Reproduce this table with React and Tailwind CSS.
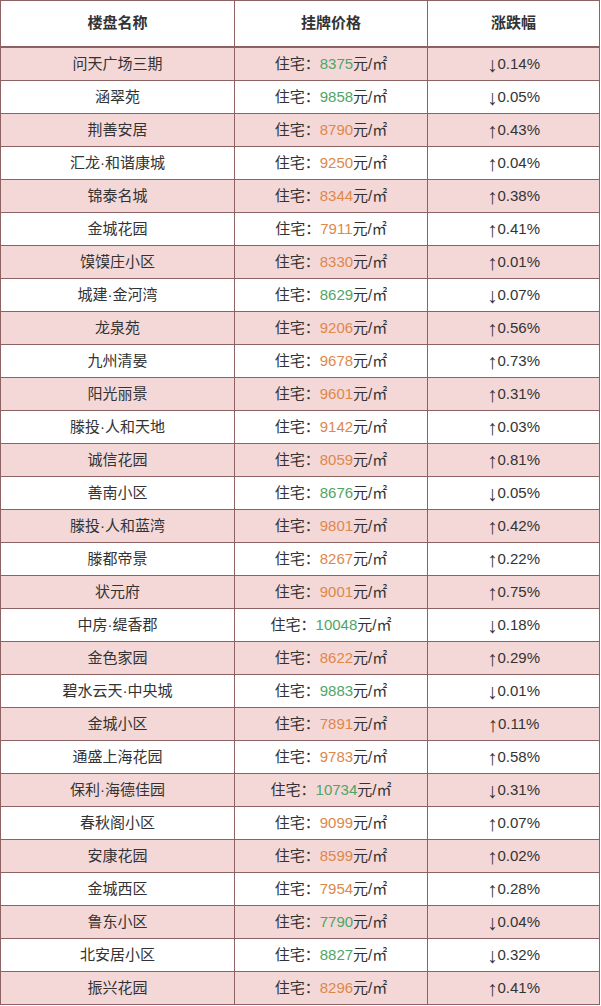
import React from "react";

const rows = [
  ["问天广场三期", "8375", "down", "0.14%"],
  ["涵翠苑", "9858", "down", "0.05%"],
  ["荆善安居", "8790", "up", "0.43%"],
  ["汇龙·和谐康城", "9250", "up", "0.04%"],
  ["锦泰名城", "8344", "up", "0.38%"],
  ["金城花园", "7911", "up", "0.41%"],
  ["馍馍庄小区", "8330", "up", "0.01%"],
  ["城建·金河湾", "8629", "down", "0.07%"],
  ["龙泉苑", "9206", "up", "0.56%"],
  ["九州清晏", "9678", "up", "0.73%"],
  ["阳光丽景", "9601", "up", "0.31%"],
  ["滕投·人和天地", "9142", "up", "0.03%"],
  ["诚信花园", "8059", "up", "0.81%"],
  ["善南小区", "8676", "down", "0.05%"],
  ["滕投·人和蓝湾", "9801", "up", "0.42%"],
  ["滕都帝景", "8267", "up", "0.22%"],
  ["状元府", "9001", "up", "0.75%"],
  ["中房·缇香郡", "10048", "down", "0.18%"],
  ["金色家园", "8622", "up", "0.29%"],
  ["碧水云天·中央城", "9883", "down", "0.01%"],
  ["金城小区", "7891", "up", "0.11%"],
  ["通盛上海花园", "9783", "up", "0.58%"],
  ["保利·海德佳园", "10734", "down", "0.31%"],
  ["春秋阁小区", "9099", "up", "0.07%"],
  ["安康花园", "8599", "up", "0.02%"],
  ["金城西区", "7954", "up", "0.28%"],
  ["鲁东小区", "7790", "down", "0.04%"],
  ["北安居小区", "8827", "down", "0.32%"],
  ["振兴花园", "8296", "up", "0.41%"],
];

export default function App() {
  return (
    <div
      className="w-[601px] bg-white text-[#333] text-[15px]"
      style={{ fontFamily: '"Liberation Sans", "Noto Sans CJK SC", sans-serif' }}
    >
      <div className="w-[600px] border-t border-l border-r border-[#8d6262]">
        {/* Header */}
        <div className="grid grid-cols-[234px_193px_1fr] h-[47px] border-b-2 border-[#8d6262] font-bold">
          <div className="flex items-center justify-center border-r border-[#8d6262]">楼盘名称</div>
          <div className="flex items-center justify-center border-r border-[#8d6262]">挂牌价格</div>
          <div className="flex items-center justify-center">涨跌幅</div>
        </div>

        {/* Body */}
        {rows.map(([name, price, dir, pct], i) => (
          <div
            key={name}
            className={
              "grid grid-cols-[234px_193px_1fr] h-[33px] border-b border-[#8d6262] " +
              (i % 2 === 0 ? "bg-[#f4d8d8]" : "bg-white")
            }
          >
            <div className="flex items-center justify-center border-r border-[#8d6262]">{name}</div>
            <div className="flex items-center justify-center border-r border-[#8d6262]">
              <span>住宅：</span>
              <span className={dir === "up" ? "text-[#e0874a]" : "text-[#4fa566]"}>{price}</span>
              <span>元/㎡</span>
            </div>
            <div className="flex items-center justify-center">
              <span className="text-[21px] leading-none">{dir === "up" ? "↑" : "↓"}</span>
              <span>{pct}</span>
            </div>
          </div>
        ))}
      </div>
    </div>
  );
}
